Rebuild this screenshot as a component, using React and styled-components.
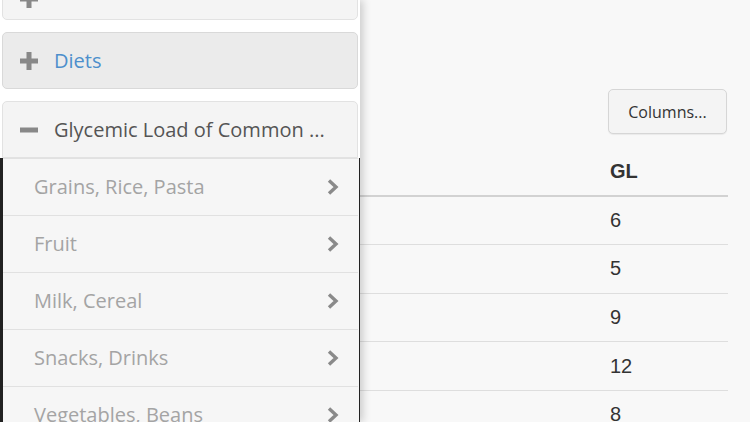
import React from "react";
import styled, { createGlobalStyle } from "styled-components";

const GlobalStyle = createGlobalStyle`
  html, body {
    margin: 0;
    padding: 0;
    width: 750px;
    height: 422px;
    overflow: hidden;
    background: #f8f8f8;
  }
  * {
    box-sizing: border-box;
  }
`;

const categories = [
  "Grains, Rice, Pasta",
  "Fruit",
  "Milk, Cereal",
  "Snacks, Drinks",
  "Vegetables, Beans",
];

const values = [6, 5, 9, 12, 8];

const PlusIcon = () => (
  <svg width="18" height="18" viewBox="0 0 18 18">
    <rect x="6.5" y="0" width="5" height="18" fill="#888" />
    <rect x="0" y="6.5" width="18" height="5" fill="#888" />
  </svg>
);

const MinusIcon = () => (
  <svg width="18" height="18" viewBox="0 0 18 18">
    <rect x="0" y="6.5" width="18" height="5" fill="#888" />
  </svg>
);

const Chevron = () => (
  <svg width="14" height="18" viewBox="0 0 14 18">
    <polyline
      points="3,2.5 10,9 3,15.5"
      fill="none"
      stroke="#8a8a8a"
      strokeWidth="3.4"
    />
  </svg>
);

const App = () => {
  return (
    <Page>
      <GlobalStyle />
      <Sidebar>
        <Panel first>
          <PlusIcon />
        </Panel>
        <Panel active>
          <PlusIcon />
          <PanelTitle link>Diets</PanelTitle>
        </Panel>
        <Panel open>
          <MinusIcon />
          <PanelTitle>Glycemic Load of Common ...</PanelTitle>
        </Panel>
        <List>
          {categories.map((c) => (
            <ListItem key={c}>
              <span>{c}</span>
              <Chevron />
            </ListItem>
          ))}
        </List>
      </Sidebar>
      <Main>
        <Toolbar>
          <Button>Columns...</Button>
        </Toolbar>
        <Table>
          <thead>
            <tr>
              <Th />
              <Th gl>GL</Th>
            </tr>
          </thead>
          <tbody>
            {values.map((v, i) => (
              <tr key={i}>
                <Td />
                <Td gl>{v}</Td>
              </tr>
            ))}
          </tbody>
        </Table>
      </Main>
    </Page>
  );
};

export default App;

const Page = styled.div`
  display: flex;
  width: 750px;
  height: 422px;
  overflow: hidden;
  background: #f8f8f8;
`;

const Sidebar = styled.div`
  position: relative;
  z-index: 2;
  flex: 0 0 360px;
  width: 360px;
  height: 422px;
  background: #fff;
  padding: 0 2px;
  box-shadow: 3px 0 8px rgba(0, 0, 0, 0.18);
  font-family: "Open Sans", "Noto Sans", sans-serif;
`;

const Panel = styled.div`
  display: flex;
  align-items: center;
  gap: 16px;
  height: 57px;
  margin-top: ${({ first }) => (first ? "-37px" : "0")};
  margin-bottom: ${({ open }) => (open ? "0" : "12px")};
  padding: 0 17px;
  background: ${({ active }) => (active ? "#ebebeb" : "#f4f4f4")};
  border: 1px solid ${({ active }) => (active ? "#d9d9d9" : "#e2e2e2")};
  border-radius: ${({ open }) => (open ? "5px 5px 0 0" : "5px")};
  svg {
    flex: 0 0 auto;
    margin-top: ${({ first }) => (first ? "14px" : "0")};
  }
`;

const PanelTitle = styled.span`
  font-size: 20px;
  color: ${({ link }) => (link ? "#4d8fcc" : "#555")};
  white-space: nowrap;
`;

const List = styled.div`
  margin: 0 -2px;
  border-left: 3px solid #222;
  border-right: 1px solid #222;
  background: #f6f6f6;
`;

const ListItem = styled.div`
  display: flex;
  align-items: center;
  justify-content: space-between;
  height: 57px;
  padding: 0 18px 2px 31px;
  border-top: 1px solid #e1e1e1;
  font-size: 20px;
  font-weight: 400;
  color: #a4a4a4;
  margin-right: 1px;
  svg {
    margin-top: 2px;
  }
`;

const Main = styled.div`
  flex: 1;
  display: flex;
  flex-direction: column;
  padding: 89px 22px 0 0;
  font-family: "Liberation Sans", Arial, sans-serif;
`;

const Toolbar = styled.div`
  display: flex;
  justify-content: flex-end;
  padding-right: 1px;
`;

const Button = styled.button`
  height: 45px;
  width: 119px;
  padding: 0;
  font-family: "Open Sans", "Noto Sans", sans-serif;
  font-size: 16px;
  color: #333;
  background: #f4f4f4;
  border: 1px solid #d6d6d6;
  border-radius: 5px;
  box-shadow: 0 1px 1px rgba(0, 0, 0, 0.06);
`;

const Table = styled.table`
  margin-top: 13px;
  width: 100%;
  border-collapse: collapse;
  color: #333;
  font-size: 20px;
`;

const Th = styled.th`
  height: 49px;
  text-align: left;
  font-weight: bold;
  padding: 0;
  width: ${({ gl }) => (gl ? "118px" : "auto")};
  border-bottom: 2px solid #d2d2d2;
`;

const Td = styled.td`
  height: 48.6px;
  padding: 0;
  border-bottom: 1px solid #dedede;
`;
